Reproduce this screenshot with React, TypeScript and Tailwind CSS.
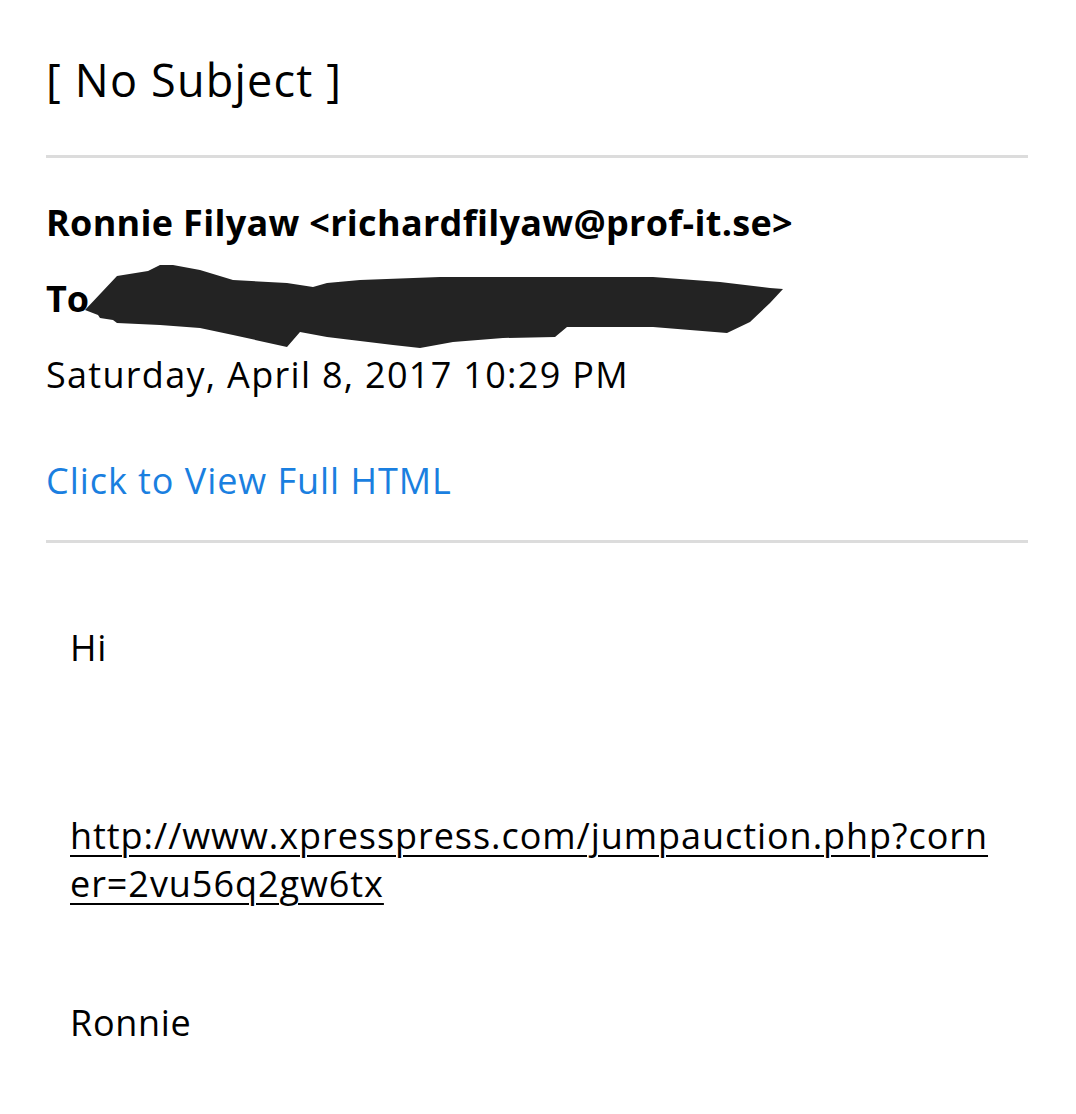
import type { FC } from 'react';

// scribbled-out recipient, drawn as a blob over the "To" line
const Redaction: FC = () => (
  <svg width="710" height="95" viewBox="0 0 710 95" className="absolute left-[34px] top-[-17px]">
    <path
      d="M5 50 L37 16 L68 11 L80 5 L93 5 L120 10 L153 20 L207 23 L233 27 L247 23 L280 20 L360 17 L473 17 L573 17 L640 22 L690 28 L703 29 L690 43 L670 62 L647 73 L573 67 L487 67 L475 77 L423 78 L373 82 L340 88 L313 85 L247 77 L220 72 L207 87 L153 75 L120 68 L80 65 L37 63 L33 60 L20 58 L18 55 Z"
      fill="#232323"
    />
  </svg>
);

const App: FC = () => {
  return (
    <div className="min-h-[1114px] w-full bg-white text-black font-['Open_Sans',sans-serif] pl-[46px] pr-[48px] pt-[50px] pb-10">
      <h1 className="text-[45px] leading-[60px] tracking-[1.2px]">[ No Subject ]</h1>

      <div className="mt-[45px] h-[3px] bg-[#dcdcdc]" />

      <div className="mt-[43px] text-[36px] leading-[44px] font-bold tracking-[0.3px]">
        Ronnie Filyaw &lt;richardfilyaw@prof-it.se&gt;
      </div>

      <div className="relative mt-[32px] text-[36px] leading-[44px] font-bold">
        To
        <Redaction />
      </div>

      <div className="mt-[32px] text-[36px] leading-[44px] tracking-[1.3px]">Saturday, April 8, 2017 10:29 PM</div>

      <a href="#" className="block mt-[62px] text-[36px] leading-[44px] tracking-[0.95px] text-[#1a7fe0]">
        Click to View Full HTML
      </a>

      <div className="mt-[37px] h-[3px] bg-[#dcdcdc]" />

      <div className="pl-[24px] text-[36px] leading-[48px] tracking-[0.7px]">
        <p className="mt-[81px]">Hi</p>
        <p className="mt-[140px] tracking-[0.95px]">
          <a href="#" className="underline underline-offset-[6px] decoration-[2px]">
            http://www.xpresspress.com/jumpauction.php?corn
            <br />
            er=2vu56q2gw6tx
          </a>
        </p>
        <p className="mt-[91px]">Ronnie</p>
      </div>
    </div>
  );
};

export default App;
